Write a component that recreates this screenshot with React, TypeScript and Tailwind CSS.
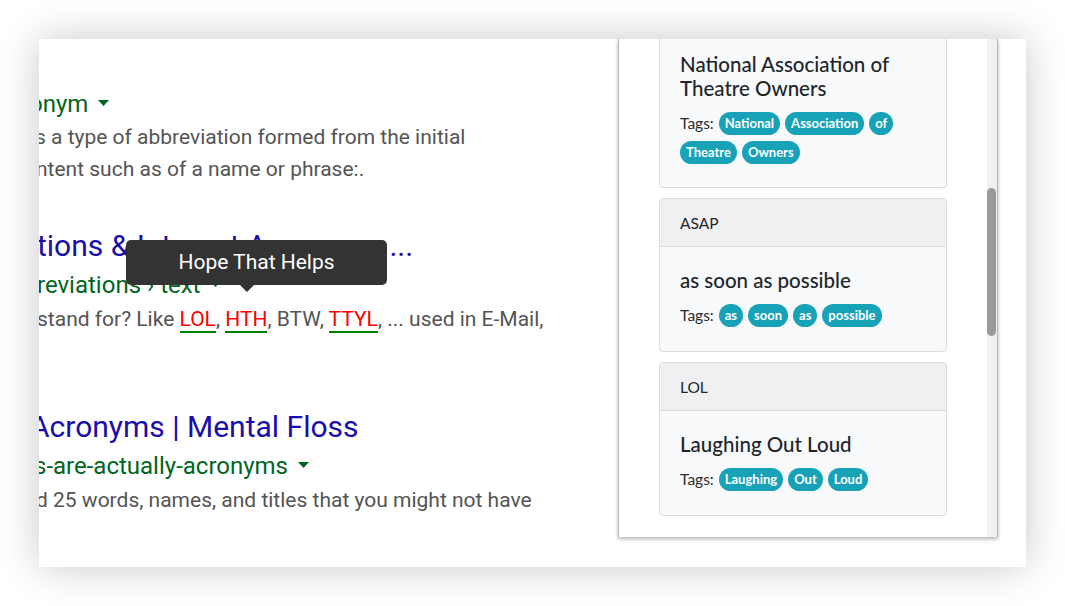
const tri = (
  <svg width="11" height="6" viewBox="0 0 11 6" className="inline-block ml-[10px] mb-[5px]">
    <path d="M0 0h11L5.5 6z" fill="#006621" />
  </svg>
);

function Abbr({ children }: { children: string }) {
  return <span className="text-[#ff0000] border-b-2 border-[#008000]">{children}</span>;
}

function Tag({ label }: { label: string }) {
  return (
    <span className="h-[23px] px-[6px] rounded-full bg-[#17a2b8] text-white text-[13px] font-bold leading-[23px]">
      {label}
    </span>
  );
}

function Tags({ items }: { items: string[] }) {
  return (
    <div className="flex flex-wrap items-center gap-x-[5px] gap-y-[6px]">
      <span className="text-[15.5px] leading-[23px] text-[#2b2b2b]">Tags:</span>
      {items.map((t, i) => (
        <Tag key={i} label={t} />
      ))}
    </div>
  );
}

function Card({ abbr, title, tags }: { abbr: string; title: string; tags: string[] }) {
  return (
    <div className="border border-[#dcdcdc] rounded-[4px] bg-[#f8f9fa] overflow-hidden">
      <div className="h-[48px] px-5 leading-[48px] bg-[#f0f0f2] border-b border-[#dcdcdc] text-[15.5px] text-[#212529]">
        {abbr}
      </div>
      <div className="px-5 pt-[21px] pb-[24px]">
        <div className="text-[20.5px] leading-[24px] font-medium text-[#212529] mb-[12px]">{title}</div>
        <Tags items={tags} />
      </div>
    </div>
  );
}

export default function App() {
  return (
    <div className="w-[1065px] h-[606px] bg-white pt-[39px] pl-[39px]">
      <div className="w-[987px] h-[528px] bg-white shadow-[0_0_38px_rgba(0,0,0,0.22)] overflow-hidden flex">
        {/* search results, cut on the left */}
        <div className="relative w-[579px] shrink-0 overflow-hidden font-['Roboto',sans-serif] whitespace-nowrap pt-[49px]">
          <div className="h-[33px] leading-[33px] text-[24px] text-[#006621] -ml-[10px]">onym{tri}</div>
          <div className="h-[32px] leading-[32px] text-[21px] text-[#545454] -ml-[4px]">s a type of abbreviation formed from the initial</div>
          <div className="h-[32px] leading-[32px] text-[21px] text-[#545454] -ml-[3px]">ntent such as of a name or phrase:.</div>

          <div className="mt-[40px] h-[42px] leading-[42px] text-[30px] text-[#1a0dab] -ml-[2px]">tions &amp; Internet Acronyms ...</div>
          <div className="h-[36px] leading-[36px] text-[24px] text-[#006621] -ml-[2px]">reviations › text{tri}</div>
          <div className="h-[32px] leading-[32px] text-[21px] text-[#545454] -ml-[2px]">
            stand for? Like <Abbr>LOL</Abbr>, <Abbr>HTH</Abbr>, BTW, <Abbr>TTYL</Abbr>, ... used in E-Mail,
          </div>

          <div className="mt-[71px] h-[42px] leading-[42px] text-[30px] text-[#1a0dab] -ml-[9px]">Acronyms | Mental Floss</div>
          <div className="h-[36px] leading-[36px] text-[24px] text-[#006621] -ml-[5px]">s-are-actually-acronyms{tri}</div>
          <div className="h-[32px] leading-[32px] text-[21px] text-[#545454] -ml-[3px]">d 25 words, names, and titles that you might not have</div>

          {/* tooltip */}
          <div className="absolute left-[87px] top-[201px] w-[261px] h-[45px] rounded-[5px] bg-[#333333] text-white text-[21px] leading-[45px] text-center">
            Hope That Helps
            <svg width="14" height="7" viewBox="0 0 14 7" className="absolute left-[114px] top-[45px]">
              <path d="M0 0h14L7 7z" fill="#333333" />
            </svg>
          </div>
        </div>

        {/* extension popup */}
        <div className="w-[380px] h-[498px] shrink-0 flex bg-white border-l border-r border-[#b5b5b5] shadow-[0_2px_4px_rgba(0,0,0,0.3)] overflow-hidden font-['Lato',sans-serif]">
          <div className="w-[368px] px-10 flex flex-col gap-[10px]">
            <div className="border border-t-0 border-[#dcdcdc] rounded-b-[4px] bg-[#f8f9fa] px-5 pt-[13px] pb-[23px]">
              <div className="text-[20.5px] leading-[24px] font-medium text-[#212529] mb-[12px]">
                National Association of Theatre Owners
              </div>
              <Tags items={["National", "Association", "of", "Theatre", "Owners"]} />
            </div>
            <Card abbr="ASAP" title="as soon as possible" tags={["as", "soon", "as", "possible"]} />
            <Card abbr="LOL" title="Laughing Out Loud" tags={["Laughing", "Out", "Loud"]} />
          </div>
          <div className="w-[10px] bg-[#f1f1f1] pt-[149px]">
            <div className="h-[148px] w-[9px] rounded-full bg-[#999999]" />
          </div>
        </div>
      </div>
    </div>
  );
}
